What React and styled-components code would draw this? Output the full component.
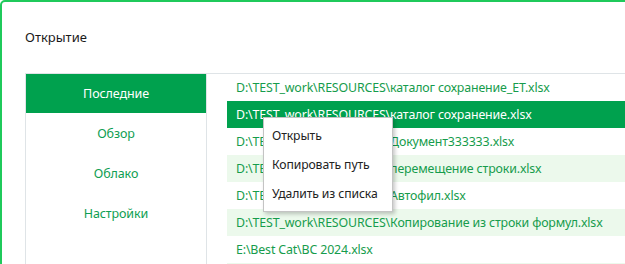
import React from "react";
import styled, { createGlobalStyle } from "styled-components";

const Global = createGlobalStyle`
  html, body { margin: 0; padding: 0; background: #ffffff; overflow: hidden; }
  body { font-family: "Segoe UI", "Noto Sans", "Open Sans", sans-serif; }
`;

const Frame = styled.div`
  position: relative;
  box-sizing: border-box;
  width: 660px;
  height: 320px;
  border: 2px solid #1fca5b;
  border-radius: 5px;
  overflow: hidden;
  background: #fff;
`;

const Header = styled.div`
  height: 71px;
  display: flex;
  align-items: center;
  padding-left: 23px;
  box-sizing: border-box;
`;

const Title = styled.h1`
  margin: 0;
  font-size: 13px;
  font-weight: 400;
  color: #1a1a1a;
  transform: translateY(-1px);
`;

const Panel = styled.div`
  display: flex;
  margin-left: 23px;
  border-top: 1px solid #dfe4e7;
  border-left: 1px solid #dfe4e7;
  height: 240px;
`;

const Sidebar = styled.nav`
  width: 180px;
  flex: none;
  border-right: 1px solid #dfe4e7;
  display: flex;
  flex-direction: column;
`;

const NavItem = styled.div`
  height: 39px;
  margin-bottom: 1px;
  display: flex;
  align-items: center;
  justify-content: center;
  font-size: 12.5px;
  letter-spacing: -0.1px;
  color: ${(p) => (p.$active ? "#ffffff" : "#0f9e52")};
  background: ${(p) => (p.$active ? "#00a14e" : "transparent")};
`;

const List = styled.div`
  flex: 1;
  margin-left: 20px;
  display: flex;
  flex-direction: column;
`;

const Row = styled.div`
  height: 27px;
  flex: none;
  display: flex;
  align-items: center;
  padding-left: 9px;
  padding-bottom: 1px;
  box-sizing: border-box;
  font-size: 12.4px;
  letter-spacing: -0.15px;
  white-space: nowrap;
  color: ${(p) => (p.$selected ? "#ffffff" : "#169c4c")};
  background: ${(p) =>
    p.$selected ? "#00a14e" : p.$striped ? "#ecf9ec" : "transparent"};
`;

const Menu = styled.div`
  position: absolute;
  left: 261px;
  top: 115px;
  width: 130px;
  box-sizing: border-box;
  padding: 3px 0;
  background: #fff;
  border: 1px solid #c4c4c4;
  box-shadow: 2px 2px 4px rgba(0, 0, 0, 0.22);
`;

const MenuItem = styled.div`
  height: 29px;
  display: flex;
  align-items: center;
  padding-left: 8px;
  padding-bottom: 1px;
  box-sizing: border-box;
  font-size: 12.2px;
  letter-spacing: -0.1px;
  color: #222;
  white-space: nowrap;
`;

const nav = ["Последние", "Обзор", "Облако", "Настройки"];
const files = [
  "D:\\TEST_work\\RESOURCES\\каталог сохранение_ET.xlsx",
  "D:\\TEST_work\\RESOURCES\\каталог сохранение.xlsx",
  "D:\\TEST_work\\RESOURCES\\Документ333333.xlsx",
  "D:\\TEST_work\\RESOURCES\\перемещение строки.xlsx",
  "D:\\TEST_work\\RESOURCES\\Автофил.xlsx",
  "D:\\TEST_work\\RESOURCES\\Копирование из строки формул.xlsx",
  "E:\\Best Cat\\BC 2024.xlsx",
  "E:\\Best Cat\\BC 2023.xlsx",
];

export default function App() {
  return (
    <>
      <Global />
      <Frame>
        <Header>
          <Title>Открытие</Title>
        </Header>
        <Panel>
          <Sidebar>
            {nav.map((n, i) => (
              <NavItem key={n} $active={i === 0}>
                {n}
              </NavItem>
            ))}
          </Sidebar>
          <List>
            {files.map((f, i) => (
              <Row key={i} $selected={i === 1} $striped={i % 2 === 1}>
                {f}
              </Row>
            ))}
          </List>
        </Panel>
        <Menu>
          <MenuItem>Открыть</MenuItem>
          <MenuItem>Копировать путь</MenuItem>
          <MenuItem>Удалить из списка</MenuItem>
        </Menu>
      </Frame>
    </>
  );
}
